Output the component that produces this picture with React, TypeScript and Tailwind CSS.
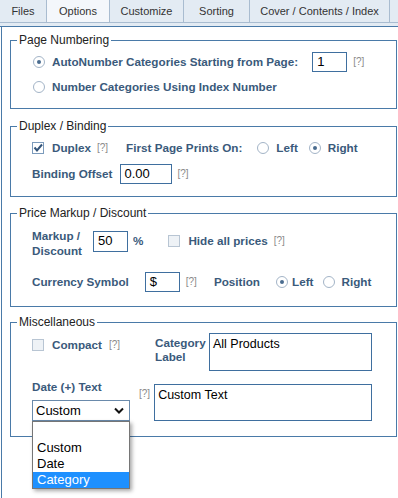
const label = "text-[11.7px] font-bold leading-[14px] text-[#3a5a7b]"
const field = "border border-[#3f6f9f] bg-white pl-[4px] text-[13px] leading-[18px] text-black"

function Help({ className }: { className?: string }) {
    return <span className={`text-[10px] leading-[12px] text-[#8a8a8a] ${className ?? ""}`}>[?]</span>
}

function Radio({ checked, className }: { checked?: boolean; className?: string }) {
    return (
        <span
            className={`flex h-[12px] w-[12px] shrink-0 items-center justify-center rounded-full border border-[#a3b4c7] bg-white ${className ?? ""}`}
        >
            {checked && <span className="h-[4px] w-[4px] rounded-full bg-[#4a6c8f]" />}
        </span>
    )
}

function Check({ checked, className }: { checked?: boolean; className?: string }) {
    return (
        <span
            className={`flex h-[12px] w-[12px] shrink-0 items-center justify-center border ${
                checked ? "border-[#7c9bbc] bg-white" : "border-[#b8c5d3] bg-[#eef2f6]"
            } ${className ?? ""}`}
        >
            {checked && (
                <svg width="10" height="10" viewBox="0 0 10 10">
                    <path d="M1.5 4.5 L4 7.5 L9 1.5" fill="none" stroke="#34557a" strokeWidth="2" />
                </svg>
            )}
        </span>
    )
}

function Fieldset({ title, className, children }: { title: string; className?: string; children: React.ReactNode }) {
    return (
        <fieldset className={`w-[387px] border border-[#4a7aa8] ${className ?? ""}`}>
            <legend className="ml-[6px] px-[2px] text-[12px] leading-[15px] text-[#222]">{title}</legend>
            {children}
        </fieldset>
    )
}

const tabs = [
    { name: "Files", w: "w-[47px]" },
    { name: "Options", w: "w-[63px]", active: true },
    { name: "Customize", w: "w-[74px]" },
    { name: "Sorting", w: "w-[66px]" },
    { name: "Cover / Contents / Index", w: "w-[140px]" },
]

export default function App() {
    return (
        <div className="h-[498px] w-[398px] overflow-hidden bg-white font-['Liberation_Sans',Arial,sans-serif]">
            <div className="flex h-[23px] border-b border-[#a9bcd0] bg-[#e3ebf3]">
                {tabs.map((t) => (
                    <div
                        key={t.name}
                        className={`flex ${t.w} items-center justify-center border-r border-[#a9bcd0] text-[11px] text-[#333] ${
                            t.active ? "bg-[#f4f7fb]" : ""
                        }`}
                    >
                        {t.name}
                    </div>
                ))}
                <div className="flex-1" />
            </div>
            <div className="h-[4px] border-b border-[#4a7aa8] bg-[#e3ebf3]" />

            <div className="ml-px h-full border-l border-[#4a7aa8] pl-[8px] pt-[6px]">
                <Fieldset title="Page Numbering">
                    <div className="pb-[11px] pl-[21px] pt-[4px]">
                        <div className="flex h-[20px] items-center">
                            <Radio checked className="ml-px" />
                            <span className={`${label} ml-[7px]`}>AutoNumber Categories Starting from Page:</span>
                            <div className={`${field} ml-[14px] h-[20px] w-[35px]`}>1</div>
                            <Help className="ml-[6px]" />
                        </div>
                        <div className="mt-[5px] flex h-[20px] items-center">
                            <Radio className="ml-px" />
                            <span className={`${label} ml-[7px]`}>Number Categories Using Index Number</span>
                        </div>
                    </div>
                </Fieldset>

                <Fieldset title="Duplex / Binding" className="mt-[10px]">
                    <div className="pb-[12px] pl-[21px] pt-[4px]">
                        <div className="flex h-[20px] items-center">
                            <Check checked />
                            <span className={`${label} ml-[8px]`}>Duplex</span>
                            <Help className="ml-[6px]" />
                            <span className={`${label} ml-[18px]`}>First Page Prints On:</span>
                            <Radio className="ml-[15px]" />
                            <span className={`${label} ml-[7px]`}>Left</span>
                            <Radio checked className="ml-[11px]" />
                            <span className={`${label} ml-[7px]`}>Right</span>
                        </div>
                        <div className="mt-[6px] flex h-[20px] items-center">
                            <span className={label}>Binding Offset</span>
                            <div className={`${field} ml-[7px] h-[20px] w-[52px]`}>0.00</div>
                            <Help className="ml-[6px]" />
                        </div>
                    </div>
                </Fieldset>

                <Fieldset title="Price Markup / Discount" className="mt-[9px]">
                    <div className="pb-[14px] pl-[21px] pt-[5px]">
                        <div className="flex h-[30px] items-center">
                            <span className={`${label} w-[61px] pt-[3px] leading-[15px]`}>
                                Markup /<br />Discount
                            </span>
                            <div className={`${field} h-[21px] w-[35px]`}>50</div>
                            <span className={`${label} ml-[5px]`}>%</span>
                            <Check className="ml-[25px]" />
                            <span className={`${label} ml-[8px]`}>Hide all prices</span>
                            <Help className="ml-[6px]" />
                        </div>
                        <div className="mt-[16px] flex h-[20px] items-center">
                            <span className={label}>Currency Symbol</span>
                            <div className={`${field} ml-[16px] h-[20px] w-[35px]`}>$</div>
                            <Help className="ml-[6px]" />
                            <span className={`${label} ml-[17px]`}>Position</span>
                            <Radio checked className="ml-[16px]" />
                            <span className={`${label} ml-[4px]`}>Left</span>
                            <Radio className="ml-[10px]" />
                            <span className={`${label} ml-[6px]`}>Right</span>
                        </div>
                    </div>
                </Fieldset>

                <Fieldset title="Miscellaneous" className="mt-[8px]">
                    <div className="pb-[15px] pl-[21px] pt-[3px]">
                        <div className="flex items-start">
                            <div className="mt-[2px] flex h-[20px] w-[123px] items-center">
                                <Check />
                                <span className={`${label} ml-[8px]`}>Compact</span>
                                <Help className="ml-[7px]" />
                            </div>
                            <span className={`${label} w-[54px] pt-[3px]`}>
                                Category<br />Label
                            </span>
                            <div className="h-[38px] w-[163px] border border-[#3f6f9f] px-[3px] pt-[2px] text-[12.5px] leading-[16px] text-black">
                                All Products
                            </div>
                        </div>
                        <div className="mt-[9px] flex items-end">
                            <div className="w-[98px]">
                                <div className={label}>Date (+) Text</div>
                                <div className="relative mt-[6px]">
                                    <div className="flex h-[21px] items-center justify-between border border-[#6a8aab] bg-white pl-[3px] pr-[5px] text-[13px] text-black">
                                        Custom
                                        <svg width="10" height="7" viewBox="0 0 10 7">
                                            <path d="M1 1.5 L5 5.5 L9 1.5" fill="none" stroke="#111" strokeWidth="2" />
                                        </svg>
                                    </div>
                                    <div className="absolute left-0 top-full z-10 w-[98px] border border-[#767676] bg-white pt-[2px] text-[13px] leading-[16px] text-black shadow-[2px_2px_4px_rgba(0,0,0,0.35)]">
                                        <div className="h-[16px]" />
                                        <div className="pl-[4px]">Custom</div>
                                        <div className="pl-[4px]">Date</div>
                                        <div className="bg-[#1e90ff] pl-[4px] text-white">Category</div>
                                    </div>
                                </div>
                            </div>
                            <Help className="ml-[9px] mt-[8px] self-start" />
                            <div className="ml-[4px] h-[37px] w-[218px] border border-[#3f6f9f] px-[3px] pt-[2px] text-[12.5px] leading-[16px] text-black">
                                Custom Text
                            </div>
                        </div>
                    </div>
                </Fieldset>
            </div>
        </div>
    )
}
